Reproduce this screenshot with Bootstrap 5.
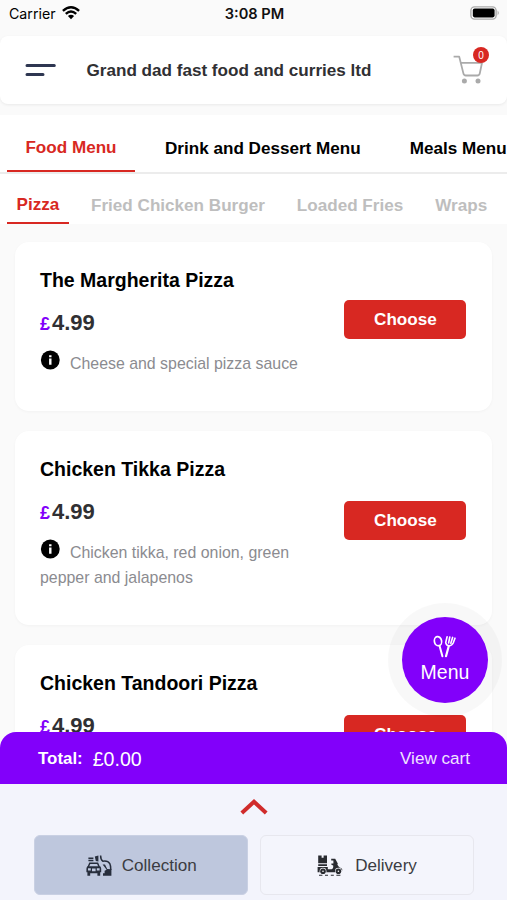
<!DOCTYPE html>
<html lang="en">
<head>
<meta charset="utf-8">
<meta name="viewport" content="width=device-width, initial-scale=1">
<title>Grand dad fast food and curries ltd</title>
<link href="https://cdn.jsdelivr.net/npm/bootstrap@5.3.0/dist/css/bootstrap.min.css" rel="stylesheet">
<style>
:root{--brand:#8200fa;--accent:#d82822}
body{font-family:"Liberation Sans",Arial,sans-serif;font-size:17.1px;line-height:24px;background:#fafafa;color:#000;height:900px;overflow:hidden}
svg{display:block;flex:none}
.status-bar{height:36px;font-family:Inter,sans-serif;font-size:14.2px;line-height:28px;padding:0 7px 0 9px;display:grid;grid-template-columns:1fr auto 1fr}
.clock{font-weight:600;font-size:14.6px;color:#111}
.top-bar{height:68px;padding:0 23px 0 25px;background:#fff;border-radius:8px;box-shadow:0 1px 3px rgba(0,0,0,.07);color:#303033}
.shop-name{margin-left:30.5px;padding-top:2px}
.cart-wrap{width:32px;height:40px;margin-top:4px}
.cart-count{position:absolute;left:21px;top:-5px;width:16px;height:16px;border-radius:50%;background:var(--accent);color:#fff;font-size:10px;line-height:17px;text-align:center}
.main-tabs{height:59px;margin-top:11px;padding-left:7px;background:#fff;border-bottom:2px solid #ececec}
.main-tabs a,.sub-tabs a{color:#000;text-decoration:none;font-weight:700;white-space:nowrap;flex:none}
.main-tabs a{height:57px;padding-top:22px}
.main-tabs a.on{width:128px;padding-top:21px;color:var(--accent);border-bottom:2px solid var(--accent);text-align:center;margin-right:30px}
.main-tabs .meals{margin-left:49px}
.sub-tabs{height:50px;padding-left:7px;background:#fff}
.sub-tabs a{color:#bebebe;padding-top:20px}
.sub-tabs a.on{width:62px;padding-top:19px;color:var(--accent);border-bottom:2px solid var(--accent);text-align:center;margin-right:22px}
.dish-list{padding:18px 15px 0;gap:20px}
.dish{border:0;border-radius:14px;padding:25px 25px 0;box-shadow:0 1px 3px rgba(0,0,0,.035);color:#000}
.dish-a{height:169px}.dish-b{height:194px}.dish-c{height:200px}
.dish-name{font-size:19.5px;font-weight:700;line-height:26px;margin:0 0 17px}
.price{font-size:22px;font-weight:700;line-height:26px;color:#303033;margin-bottom:13px}
.price span{font-size:18px;color:var(--brand);margin-right:2px}
.about{font-size:15.9px;line-height:24.5px;color:#8b8b90;width:276px;margin:0}
.about svg{display:inline-block;vertical-align:-1px;margin-right:10px}
.choose{width:122px;height:39px;padding:0;border-radius:5px;border:0;background:var(--accent)!important;color:#fff!important;font-weight:700;font-size:17.1px;line-height:39px;flex:none;margin-right:.6px}
.dish-a .choose{margin-top:33px}.dish-b .choose{margin-top:45px}.dish-c .choose{margin-top:45px}
.menu-fab{position:fixed;left:388px;top:603px;width:114px;height:114px;border-radius:50%;background:rgba(0,0,0,.028);z-index:1020}
.menu-fab a{width:86px;height:86px;border-radius:50%;background:var(--brand);color:#fff;text-decoration:none;font-size:19.5px;padding-top:18px}
.total-bar{height:52px;padding:2px 37px 0 38px;background:var(--brand);color:#fff;border-radius:16px 16px 0 0}
.total-bar b{font-size:16.9px}
.sum{font-size:19.6px;margin-left:10px}
.view-cart{color:#f0e3ff;text-decoration:none}
.order-type{height:116px;padding:15px 33px 0 34px;background:#f3f4fc}
.mode{height:60px;border:1px solid #e7e7ee;border-radius:6px;color:#3b3c42!important;background:#f4f5fc;font-size:17.1px;padding:1px 0 0}
.mode.picked{background:#bec7dd;border-color:#c9d0e3}
</style>
<script src="https://cdn.jsdelivr.net/npm/bootstrap@5.3.0/dist/js/bootstrap.bundle.min.js"></script>
</head>
<body>
<div class="status-bar">
  <div class="d-flex">Carrier
    <svg width="18" height="14" viewBox="0 0 18 14" style="margin:6px 0 0 6px" fill="none" stroke="#000" stroke-width="2.4"><path d="M.9 4.8Q9-2.2 17.1 4.8M3.8 7.9Q9 3.2 14.2 7.9"/><path d="M5.9 10.1Q9 7.5 12.1 10.1L9 13.3Z" fill="#000" stroke="none"/></svg>
  </div>
  <div class="clock">3:08 PM</div>
  <svg class="ms-auto" width="30" height="14" viewBox="0 0 30 14" style="margin-top:6px"><rect x=".9" y=".9" width="25.2" height="12.2" rx="3.6" fill="#fff" stroke="#aaa" stroke-width="1.4"/><rect x="2.8" y="2.6" width="21.8" height="8.8" rx="1.8"/><path d="M27.6 4.6q2.4 2.4 0 4.8z" fill="#aaa"/></svg>
</div>
<header class="top-bar d-flex align-items-center">
  <svg width="31" height="14" viewBox="0 0 31 14" stroke="#2e3651" stroke-width="3" stroke-linecap="round"><path d="M2 2.6H29.3M2 11.4H18"/></svg>
  <div class="shop-name fw-bold">Grand dad fast food and curries ltd</div>
  <div class="cart-wrap position-relative ms-auto">
    <svg width="32" height="36" viewBox="0 0 32 36" fill="none" stroke="#aaa" stroke-width="1.8" stroke-linejoin="round"><path d="M1.6 4.6H7.2L11.4 21.4Q11.8 23.5 13.8 23.5H25.4Q27.4 23.5 27.8 21.4L30 10.8H9"/><g fill="#aaa" stroke="none"><circle cx="12.4" cy="29" r="2.5"/><circle cx="26" cy="29" r="2.5"/></g></svg>
    <span class="cart-count">0</span>
  </div>
</header>
<nav class="main-tabs d-flex overflow-hidden">
  <a class="on" href="#">Food Menu</a><a href="#">Drink and Dessert Menu</a><a class="meals" href="#">Meals Menu</a>
</nav>
<nav class="sub-tabs d-flex overflow-hidden">
  <a class="on" href="#">Pizza</a><a href="#">Fried Chicken Burger</a><a href="#" style="margin-left:32px">Loaded Fries</a><a href="#" style="margin-left:32px">Wraps</a>
</nav>
<main class="dish-list d-flex flex-column">
  <article class="card dish dish-a flex-row justify-content-between">
    <div>
      <h2 class="dish-name">The Margherita Pizza</h2>
      <div class="price"><span>£</span>4.99</div>
      <p class="about"><svg width="20" height="20" viewBox="0 0 20 20"><circle cx="10.3" cy="10" r="9.4" fill="#000"/><path d="M9.1 5.2h2.4v2.1H9.1zM9.1 8.4h2.4v6.4H9.1z" fill="#fff"/></svg>Cheese and special pizza sauce</p>
    </div>
    <button class="btn choose">Choose</button>
  </article>
  <article class="card dish dish-b flex-row justify-content-between">
    <div>
      <h2 class="dish-name">Chicken Tikka Pizza</h2>
      <div class="price"><span>£</span>4.99</div>
      <p class="about"><svg width="20" height="20" viewBox="0 0 20 20"><circle cx="10.3" cy="10" r="9.4" fill="#000"/><path d="M9.1 5.2h2.4v2.1H9.1zM9.1 8.4h2.4v6.4H9.1z" fill="#fff"/></svg>Chicken tikka, red onion, green pepper and jalapenos</p>
    </div>
    <button class="btn choose">Choose</button>
  </article>
  <article class="card dish dish-c flex-row justify-content-between">
    <div>
      <h2 class="dish-name">Chicken Tandoori Pizza</h2>
      <div class="price"><span>£</span>4.99</div>
    </div>
    <button class="btn choose">Choose</button>
  </article>
</main>
<div class="menu-fab d-flex align-items-center justify-content-center">
  <a href="#" class="d-flex flex-column align-items-center">
    <svg width="24" height="24" viewBox="0 0 24 24" fill="none" stroke="#fff" stroke-linecap="round"><ellipse cx="5" cy="6.2" rx="3.6" ry="4.6" stroke-width="1.7" transform="rotate(-12 5 6.2)"/><path d="M6.6 11L9.4 21.2" stroke-width="2"/><path d="M15.8 11L13 21.2" stroke-width="2.2"/><path d="M14.1 1.8L12.7 7.6Q13.2 10.4 16 10.8Q19 10.6 20.2 8L22 3.2M16.8 2L15.6 8M19.6 2.4L17.8 8.2" stroke-width="1.6"/></svg>
    <span style="margin-top:1px">Menu</span>
  </a>
</div>
<footer class="fixed-bottom">
  <div class="total-bar d-flex align-items-center">
    <b>Total:</b><span class="sum">£0.00</span><a class="view-cart ms-auto" href="#">View cart</a>
  </div>
  <div class="order-type">
    <svg class="mx-auto" width="28" height="16" viewBox="0 0 28 16" fill="none" stroke="#d02b2b" stroke-width="4"><path d="M1.8 14L14 2.8L26.2 14"/></svg>
    <div class="d-flex" style="gap:12px;margin-top:20px">
      <button class="btn mode picked flex-fill w-50 d-flex align-items-center justify-content-center">
        <svg width="27" height="24" viewBox="0 0 27 24" fill="#272e3c"><path d="M3.4 3.4h5v1.5h-5zM3.4 5.8h5v1.4h-5zM9.8 2.6l3.6-1v6l-2.6-.6z"/><path d="M3.2 13L4.8 9.2h7.8l1.6 3.8" fill="none" stroke="#272e3c" stroke-width="1.5"/><path fill-rule="evenodd" d="M2.4 12.2h12.8q1 1 1 2.6v3.4h-1v3.6h-2.8v-2.6H5.2v2.6H2.4v-3.6h-1v-3.4q0-1.6 1-2.6zM3 14.2v2.2h2.8v-2.2zM11.8 14.2v2.2h2.8v-2.2zM7 14.4v2.8h3.6v-2.8z"/><path d="M15.6 1.6q0 4 2.2 5.6 5-.8 7 2.4 1 1.8 1 6.4" fill="none" stroke="#272e3c" stroke-width="1.5"/><path d="M17.6 10.6h2.4l2.2 4.4 4.2.2v6.6h-8.4v-2.6h1.6v-2.4l2-1z"/></svg>
        <span style="margin-left:9.5px">Collection</span>
      </button>
      <button class="btn mode flex-fill w-50 d-flex align-items-center justify-content-center">
        <svg width="26" height="24" viewBox="0 0 26 24" fill="#292b30"><path fill-rule="evenodd" d="M1.2 1.4h8.8v7.8H1.2zM4.6 1.4v2.4h2V1.4zM1.2 10.2h8.8v1.8H1.2z"/><path d="M.6 13h10.2v2.2h3.8q2-.4 1.6-3.6l-1.8-.8V9.4h2V6.6h-2.2V4.8h4l2.6 4.6-.4 1.4 1.8 2.4q2.8.6 3.4 3h-5.4q-1.6.4-2.2 2H.6z"/><circle cx="6" cy="17.2" r="3.4" fill="#f4f5fc"/><circle cx="6" cy="17.2" r="2.8"/><circle cx="6" cy="17.2" r=".8" fill="#fff"/><circle cx="21.4" cy="17.2" r="3.4" fill="#f4f5fc"/><circle cx="21.4" cy="17.2" r="2.8"/><circle cx="21.4" cy="17.2" r=".8" fill="#fff"/><path d="M2 20.8h3.4v1H2zM8 20.8h3v1H8zM13.8 20.8h3v1h-3zM19.4 20.8h4v1h-4z"/></svg>
        <span style="margin-left:12px">Delivery</span>
      </button>
    </div>
  </div>
</footer>
</body>
</html>
